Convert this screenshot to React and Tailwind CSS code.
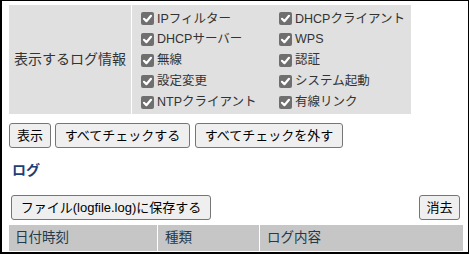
import React from 'react';

const FONT = { fontFamily: '"Liberation Sans", Arial, "Noto Sans CJK JP", sans-serif' };

const options = [
  ['IPフィルター', 'DHCPクライアント'],
  ['DHCPサーバー', 'WPS'],
  ['無線', '認証'],
  ['設定変更', 'システム起動'],
  ['NTPクライアント', '有線リンク'],
];

const Check = () => (
  <svg width="13" height="13" viewBox="0 0 13 13" className="shrink-0">
    <rect x="0" y="0" width="13" height="13" rx="2" fill="#6f6f6f" />
    <path d="M3 6.8 L5.4 9.2 L10 3.8" stroke="#fff" strokeWidth="2.2" fill="none" strokeLinecap="round" strokeLinejoin="round" />
  </svg>
);

const Option = ({ label }) => (
  <label className="flex items-center gap-[3px] h-[20.75px] text-[12.5px] text-[#333]">
    <Check />
    <span>{label}</span>
  </label>
);

const Btn = ({ children, className = '' }) => (
  <button className={`h-[25px] px-0 flex items-center justify-center bg-[#efefef] border border-[#767676] rounded-[3px] text-[13px] text-black leading-none ${className}`}>
    {children}
  </button>
);

export default function App() {
  return (
    <div
      className="w-[469px] h-[254px] bg-white border-black border-t border-r border-l-2 border-b-2 overflow-hidden"
      style={FONT}
    >
      <div className="flex gap-px ml-[7px] mt-[4px] w-[402px] h-[109px]">
        <div className="w-[122px] bg-[#e0e0e0] flex items-center pl-[5px] text-[14px] text-[#333]">
          表示するログ情報
        </div>
        <div className="flex-1 bg-[#e0e0e0] pl-[9px] pt-[3.5px] pb-[1.5px] grid grid-cols-[138px_1fr]">
          {options.map(([a, b]) => (
            <React.Fragment key={a}>
              <Option label={a} />
              <Option label={b} />
            </React.Fragment>
          ))}
        </div>
      </div>

      <div className="flex items-center gap-[4px] ml-[7px] mt-[9px]">
        <Btn className="w-[42px]">表示</Btn>
        <Btn className="w-[135px]">すべてチェックする</Btn>
        <Btn className="w-[148px] ml-px">すべてチェックを外す</Btn>
      </div>

      <div className="ml-[10px] mt-[15px] text-[14px] font-bold text-[#1d3d78] leading-none">ログ</div>

      <div className="flex justify-between items-end ml-[9px] mr-[8px] mt-[18px]">
        <Btn className="w-[200px]">ファイル(logfile.log)に保存する</Btn>
        <Btn className="w-[41px]">消去</Btn>
      </div>

      <div className="flex gap-px ml-[7px] mr-[5px] mt-[5px] h-[26px] text-[13.5px] text-[#243a4a]">
        <div className="w-[148px] bg-[#c6c6c6] flex items-center pl-[6px]">日付時刻</div>
        <div className="w-[101px] bg-[#c6c6c6] flex items-center pl-[7px]">種類</div>
        <div className="flex-1 bg-[#c6c6c6] flex items-center pl-[7px]">ログ内容</div>
      </div>
    </div>
  );
}
